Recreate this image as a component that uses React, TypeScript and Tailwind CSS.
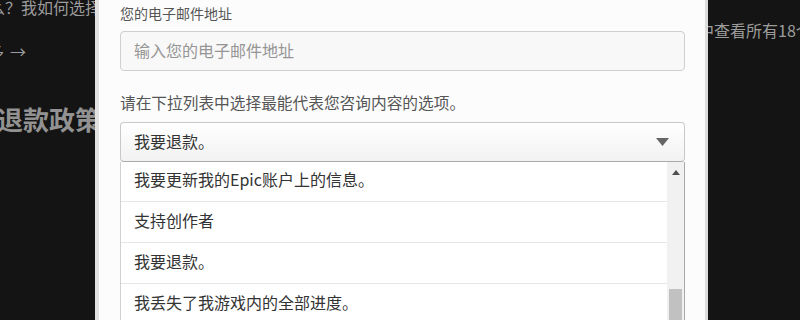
import { ReactNode } from 'react';

const items = [
    '我要更新我的Epic账户上的信息。',
    '支持创作者',
    '我要退款。',
    '我丢失了我游戏内的全部进度。',
];

function Label({ children }: { children: ReactNode }) {
    return (
        <div className="text-[14px] leading-[20px] text-[#555]">{children}</div>
    );
}

export default function App() {
    return (
        <div className="w-[800px] h-[320px] overflow-hidden bg-[#141414] flex font-['Noto_Sans_CJK_SC',sans-serif]">
            {/* page behind the modal, left part */}
            <div className="w-[95px] shrink-0 overflow-hidden flex flex-col items-end text-[#9c9c9c]">
                <div className="whitespace-nowrap text-[16px] leading-[16px] -mt-[1px] -mr-[6px]">
                    为什么？我如何选择
                </div>
                <div className="self-start whitespace-nowrap text-[16px] leading-[20px] mt-[26px] -ml-[12px] flex">
                    <span>多</span>
                    <span className="ml-[6px]">→</span>
                </div>
                <div className="whitespace-nowrap text-[26px] leading-[32px] font-bold mt-[42px] -mr-[6px] text-[#929292]">
                    了解退款政策
                </div>
            </div>

            {/* modal */}
            <div className="w-[613px] shrink-0 bg-[#fcfcfc] border-l-4 border-l-[#e2e2e2] border-r-[3px] border-r-[#dcdcdc] pl-[21px] pr-[20px] pt-[3px]">
                <Label>您的电子邮件地址</Label>
                <div className="mt-[8px] h-[40px] rounded-[4px] border border-[#cfcfcf] bg-[#f8f8f8] flex items-center px-[13px] pb-[3px] text-[16px] text-[#959595]">
                    输入您的电子邮件地址
                </div>
                <div className="mt-[22px] text-[15.7px] leading-[20px] text-[#555]">
                    请在下拉列表中选择最能代表您咨询内容的选项。
                </div>
                <div className="mt-[9px] h-[40px] rounded-[4px] border border-[#c8c8c8] border-b-[#aaa] bg-gradient-to-b from-white to-[#f2f2f2] flex items-center justify-between pl-[13px] pr-[15px] text-[16px] text-[#333]">
                    <span className="pb-[2px]">我要退款。</span>
                    <svg width="13" height="8" viewBox="0 0 13 8">
                        <path d="M0 0 L13 0 L6.5 8 Z" fill="#666" />
                    </svg>
                </div>
                <div className="h-[200px] flex border-l border-l-[#d0d0d0] border-r border-r-[#a8a8a8] bg-white overflow-hidden">
                    <div className="flex-1 -mt-[1px]">
                        {items.map((t) => (
                            <div
                                key={t}
                                className="h-[41px] border-b border-[#e6e6e6] flex items-center px-[13px] pb-[5px] text-[16px] text-[#333]"
                            >
                                {t}
                            </div>
                        ))}
                    </div>
                    <div className="w-[17px] bg-[#f1f1f1] flex flex-col items-center">
                        <svg width="8" height="5" viewBox="0 0 8 5" className="mt-[8px]">
                            <path d="M0 5 L4 0 L8 5 Z" fill="#505050" />
                        </svg>
                        <div className="mt-[114px] w-[13px] h-[60px] bg-[#c1c1c1]" />
                    </div>
                </div>
            </div>

            {/* page behind the modal, right part */}
            <div className="flex-1 overflow-hidden">
                <div className="whitespace-nowrap text-[16px] leading-[20px] text-[#9c9c9c] mt-[20px] -ml-[10px]">
                    中查看所有18个问题
                </div>
            </div>
        </div>
    );
}
